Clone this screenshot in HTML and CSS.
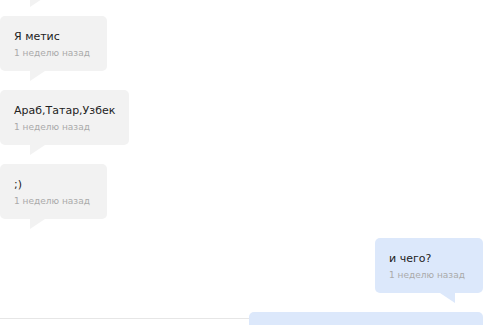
FILE: index.html
```html
<!DOCTYPE html>
<html>
<head>
<meta charset="utf-8">
<link rel="stylesheet" href="styles.css">
</head>
<body>
<div class="chat">
  <div class="msg in">
    <div class="bubble prev"></div>
  </div>
  <div class="msg in">
    <div class="bubble">
      <div class="text">Я метис</div>
      <div class="time">1 неделю назад</div>
    </div>
  </div>
  <div class="msg in">
    <div class="bubble">
      <div class="text">Араб,Татар,Узбек</div>
      <div class="time">1 неделю назад</div>
    </div>
  </div>
  <div class="msg in">
    <div class="bubble">
      <div class="text">;)</div>
      <div class="time">1 неделю назад</div>
    </div>
  </div>
  <div class="msg out">
    <div class="bubble">
      <div class="text">и чего?</div>
      <div class="time">1 неделю назад</div>
    </div>
  </div>
  <div class="msg out last">
    <div class="rule"></div>
    <div class="bubble next"></div>
  </div>
</div>
</body>
</html>
```
FILE: styles.css
```css
html, body {
  margin: 0;
  padding: 0;
  background: #fff;
  overflow: hidden;
  height: 325px;
}
.chat {
  width: 483px;
  display: flex;
  flex-direction: column;
  gap: 19px;
  margin-top: -58px;
  font-family: "DejaVu Sans", Verdana, sans-serif;
}
.msg {
  display: flex;
  position: relative;
  flex-shrink: 0;
}
.msg.out {
  justify-content: flex-end;
}
.bubble {
  position: relative;
  box-sizing: border-box;
  height: 55px;
  min-width: 107px;
  padding: 13px 14px 0 14px;
  border-radius: 5px;
  background: #f2f2f2;
}
.bubble::after {
  content: "";
  position: absolute;
  top: 55px;
  width: 0;
  height: 0;
  border-style: solid;
}
.in .bubble::after {
  left: 30px;
  border-width: 10px 15px 0 0;
  border-color: #f2f2f2 transparent transparent transparent;
}
.out .bubble {
  background: #dce8fb;
  min-width: 108px;
}
.out .bubble::after {
  right: 28px;
  border-width: 0 15px 10px 0;
  border-color: transparent #dce8fb transparent transparent;
  top: 55px;
}
.text {
  font-size: 11px;
  line-height: 16px;
  color: #222;
  white-space: nowrap;
}
.time {
  margin-top: 2px;
  font-size: 9px;
  line-height: 12px;
  color: #aaa;
  white-space: nowrap;
}
.bubble.prev {
  width: 107px;
}
.bubble.next {
  width: 234px;
}
.rule {
  position: absolute;
  left: 0;
  top: 6px;
  width: 250px;
  height: 1px;
  background: #e6e6e6;
}
```
